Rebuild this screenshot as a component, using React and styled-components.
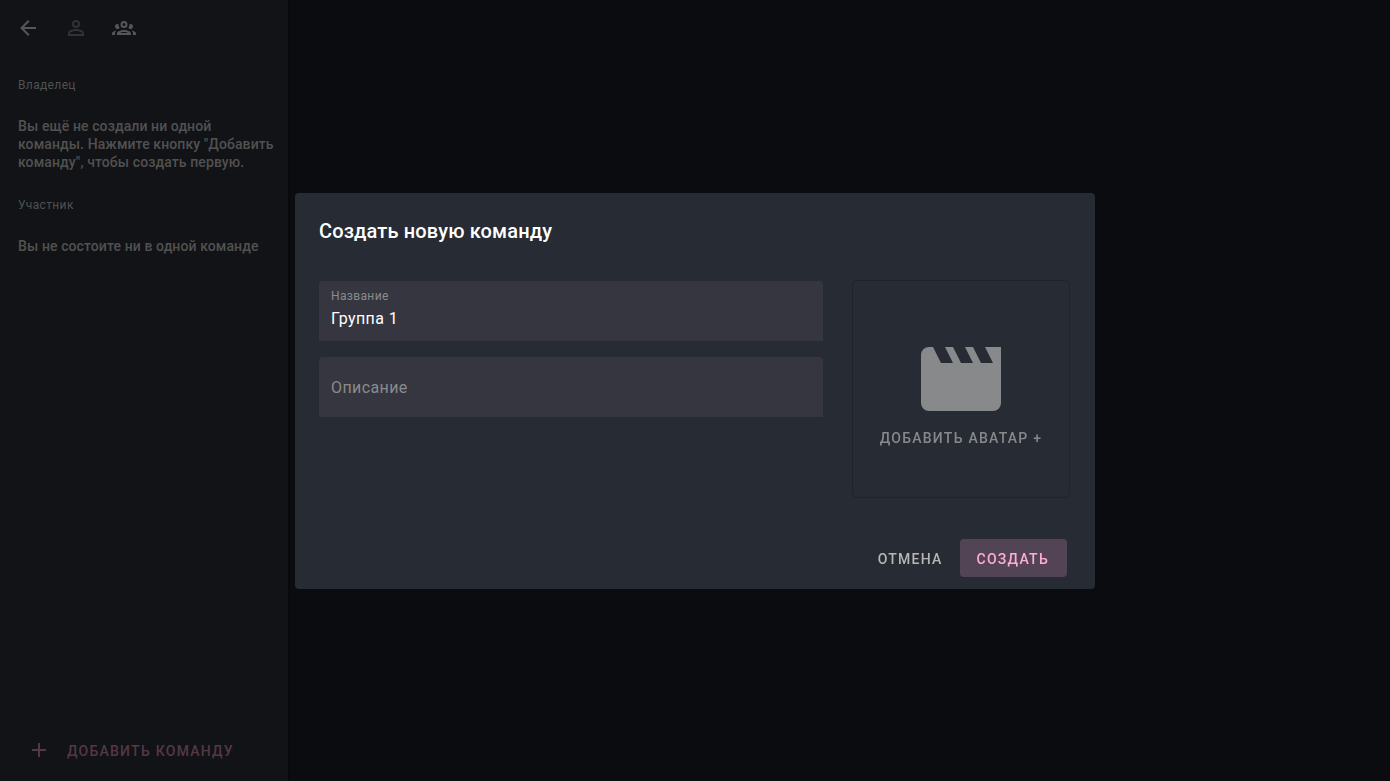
import React, { useState } from "react";
import styled, { createGlobalStyle } from "styled-components";

const GlobalStyle = createGlobalStyle`
  *, *::before, *::after { box-sizing: border-box; }
  body {
    margin: 0;
    background: #0a0c0f;
    color: #fff;
    font-family: Roboto, "Liberation Sans", sans-serif;
    font-size: 16px;
  }
  button, input { font-family: inherit; }
`;

const icons = {
  back: "M20,11V13H8L13.5,18.5L12.08,19.92L4.16,12L12.08,4.08L13.5,5.5L8,11H20Z",
  person:
    "M12,4A4,4 0 0,1 16,8A4,4 0 0,1 12,12A4,4 0 0,1 8,8A4,4 0 0,1 12,4M12,6A2,2 0 0,0 10,8A2,2 0 0,0 12,10A2,2 0 0,0 14,8A2,2 0 0,0 12,6M12,13C14.67,13 20,14.33 20,17V20H4V17C4,14.33 9.33,13 12,13M12,14.9C9.03,14.9 5.9,16.36 5.9,17V18.1H18.1V17C18.1,16.36 14.97,14.9 12,14.9Z",
  group:
    "M12,5A3.5,3.5 0 0,0 8.5,8.5A3.5,3.5 0 0,0 12,12A3.5,3.5 0 0,0 15.5,8.5A3.5,3.5 0 0,0 12,5M12,7A1.5,1.5 0 0,1 13.5,8.5A1.5,1.5 0 0,1 12,10A1.5,1.5 0 0,1 10.5,8.5A1.5,1.5 0 0,1 12,7M5.5,8A2.5,2.5 0 0,0 3,10.5C3,11.44 3.53,12.25 4.29,12.68C4.65,12.88 5.06,13 5.5,13C5.94,13 6.35,12.88 6.71,12.68C7.08,12.47 7.39,12.17 7.62,11.81C6.89,10.86 6.5,9.7 6.5,8.5C6.5,8.41 6.5,8.31 6.5,8.22C6.2,8.08 5.86,8 5.5,8M18.5,8C18.14,8 17.8,8.08 17.5,8.22C17.5,8.31 17.5,8.41 17.5,8.5C17.5,9.7 17.11,10.86 16.38,11.81C16.5,12 16.63,12.15 16.78,12.3C16.94,12.45 17.1,12.58 17.29,12.68C17.65,12.88 18.06,13 18.5,13C18.94,13 19.35,12.88 19.71,12.68C20.47,12.25 21,11.44 21,10.5A2.5,2.5 0 0,0 18.5,8M12,14C9.66,14 5,15.17 5,17.5V19H19V17.5C19,15.17 14.34,14 12,14M4.71,14.55C2.78,14.78 0,15.76 0,17.5V19H3V17.07C3,16.06 3.69,15.22 4.71,14.55M19.29,14.55C20.31,15.22 21,16.06 21,17.07V19H24V17.5C24,15.76 21.22,14.78 19.29,14.55M12,16C13.53,16 15.24,16.5 16.23,17H7.77C8.76,16.5 10.47,16 12,16Z",
  plus: "M19,13H13V19H11V13H5V11H11V5H13V11H19V13Z",
  movie:
    "M18,4L20,8H17L15,4H13L15,8H12L10,4H8L10,8H7L5,4H4A2,2 0 0,0 2,6V18A2,2 0 0,0 4,20H20A2,2 0 0,0 22,18V4H18Z",
};

function Icon({ name, size = 24 }) {
  return (
    <svg width={size} height={size} viewBox="0 0 24 24" fill="currentColor" aria-hidden="true">
      <path d={icons[name]} />
    </svg>
  );
}

const Page = styled.div`
  display: flex;
  min-height: 100vh;
`;

const Sidebar = styled.aside`
  display: flex;
  flex-direction: column;
  width: 288px;
  background: #111316;
  box-shadow: 1px 0 2px rgba(0, 0, 0, 0.3);
  color: #515151;
`;

const Toolbar = styled.nav`
  display: flex;
  padding: 4px;
`;

const IconButton = styled.button`
  display: grid;
  place-items: center;
  width: 48px;
  height: 48px;
  padding: 0;
  border: 0;
  background: none;
  color: ${(p) => (p.$muted ? "#313235" : "#555657")};
`;

const Section = styled.section`
  padding: 20px 12px 0 18px;
`;

const SectionTitle = styled.h2`
  margin: 0;
  font-size: 12px;
  font-weight: 400;
  line-height: 18px;
  letter-spacing: 0.03em;
`;

const SectionText = styled.p`
  margin: 23px 0 5px;
  font-size: 14px;
  font-weight: 500;
  line-height: 18px;
  letter-spacing: 0.0072em;
`;

const AddButton = styled.button`
  display: flex;
  align-items: center;
  gap: 16px;
  height: 62px;
  margin-top: auto;
  padding: 0 27px;
  border: 0;
  background: none;
  color: #563844;
  font-size: 14px;
  font-weight: 500;
  line-height: 20px;
  letter-spacing: 0.0892em;
  text-transform: uppercase;
`;

const AddLabel = styled.span`
  padding-top: 2px;
`;

const Overlay = styled.div`
  position: fixed;
  inset: 0;
  display: grid;
  place-items: center;
`;

const Dialog = styled.form`
  display: flex;
  flex-direction: column;
  width: 800px;
  max-width: calc(100% - 48px);
  border-radius: 4px;
  background: #272b33;
`;

const DialogTitle = styled.h1`
  margin: 0;
  padding: 22px 24px;
  font-size: 20px;
  font-weight: 500;
  line-height: 32px;
  letter-spacing: 0.0075em;
`;

const DialogBody = styled.div`
  display: flex;
  align-items: flex-start;
  gap: 29px;
  padding: 11px 25px 0 24px;
`;

const Fields = styled.div`
  display: flex;
  flex: 1;
  flex-direction: column;
  gap: 16px;
  padding-top: 1px;
`;

const Field = styled.label`
  display: flex;
  flex-direction: column;
  height: 60px;
  padding: 8px 12px 6px;
  border-radius: 4px 4px 0 0;
  background: #35363f;
`;

const FieldLabel = styled.span`
  color: #8b8b8d;
  font-size: 12px;
  line-height: 14px;
  letter-spacing: 0.03em;
`;

const FieldInput = styled.input`
  flex: 1;
  width: 100%;
  min-width: 0;
  padding: 0;
  border: 0;
  outline: 0;
  background: none;
  color: #fff;
  font-size: 16px;
  line-height: 24px;
  letter-spacing: 0.025em;
  &::placeholder { color: #8b8b8d; opacity: 1; }
`;

const AvatarButton = styled.button`
  display: flex;
  flex-direction: column;
  align-items: center;
  justify-content: center;
  width: 218px;
  height: 218px;
  padding: 2px 0 0;
  border: 1px solid #212329;
  border-radius: 5px;
  background: none;
  color: #88898b;
  font-size: 14px;
  font-weight: 500;
  line-height: 22px;
  letter-spacing: 0.0892em;
  text-transform: uppercase;
`;

const Actions = styled.div`
  display: flex;
  justify-content: flex-end;
  padding: 41px 28px 12px;
`;

const ActionButton = styled.button`
  height: 38px;
  padding: 2px ${(p) => (p.$primary ? "18px" : "17px")} 0 17px;
  border: 0;
  border-radius: 4px;
  background: ${(p) => (p.$primary ? "#534455" : "none")};
  color: ${(p) => (p.$primary ? "#ffacd9" : "#b7b8b6")};
  font-size: 14px;
  font-weight: 500;
  letter-spacing: 0.0892em;
  text-transform: uppercase;
`;

export default function App() {
  const [name, setName] = useState("Группа 1");
  const [description, setDescription] = useState("");

  return (
    <>
      <GlobalStyle />
      <Page>
        <Sidebar>
          <Toolbar>
            <IconButton aria-label="Назад"><Icon name="back" /></IconButton>
            <IconButton aria-label="Профиль" $muted><Icon name="person" /></IconButton>
            <IconButton aria-label="Команды"><Icon name="group" /></IconButton>
          </Toolbar>
          <Section>
            <SectionTitle>Владелец</SectionTitle>
            <SectionText>
              Вы ещё не создали ни одной команды. Нажмите кнопку "Добавить команду", чтобы создать первую.
            </SectionText>
          </Section>
          <Section>
            <SectionTitle>Участник</SectionTitle>
            <SectionText>Вы не состоите ни в одной команде</SectionText>
          </Section>
          <AddButton><Icon name="plus" /><AddLabel>Добавить команду</AddLabel></AddButton>
        </Sidebar>
      </Page>
      <Overlay>
        <Dialog role="dialog" aria-labelledby="dialog-title" onSubmit={(e) => e.preventDefault()}>
          <DialogTitle id="dialog-title">Создать новую команду</DialogTitle>
          <DialogBody>
            <Fields>
              <Field>
                <FieldLabel>Название</FieldLabel>
                <FieldInput value={name} onChange={(e) => setName(e.target.value)} />
              </Field>
              <Field>
                <FieldInput
                  aria-label="Описание"
                  placeholder="Описание"
                  value={description}
                  onChange={(e) => setDescription(e.target.value)}
                />
              </Field>
            </Fields>
            <AvatarButton type="button">
              <Icon name="movie" size={96} />
              Добавить аватар +
            </AvatarButton>
          </DialogBody>
          <Actions>
            <ActionButton type="button">Отмена</ActionButton>
            <ActionButton type="submit" $primary>Создать</ActionButton>
          </Actions>
        </Dialog>
      </Overlay>
    </>
  );
}
